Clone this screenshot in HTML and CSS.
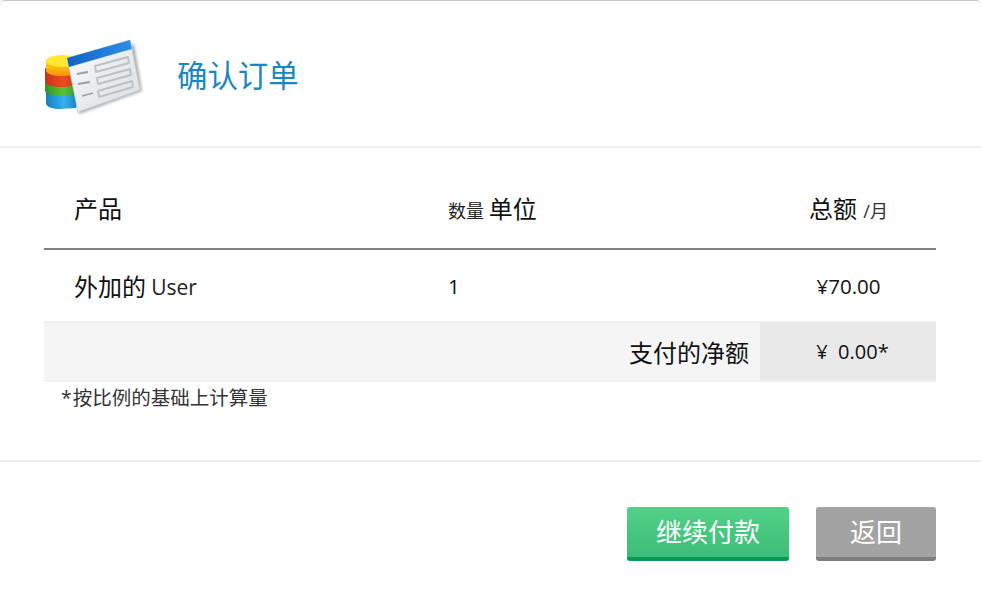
FILE: index.html
```html
<!DOCTYPE html>
<html lang="zh">
<head>
<meta charset="utf-8">
<title>确认订单</title>
<link rel="stylesheet" href="styles.css">
</head>
<body>
<div class="modal">
  <header class="head">
    <svg class="logo" width="100" height="80" viewBox="0 0 100 80">
      <defs>
        <linearGradient id="sheet" x1="0" y1="0" x2="1" y2="1"><stop offset="0" stop-color="#fdfdfe"/><stop offset="1" stop-color="#d6dde2"/></linearGradient>
        <linearGradient id="band" x1="0" y1="0" x2="1" y2="0"><stop offset="0" stop-color="#0f62c6"/><stop offset="1" stop-color="#2f8ee6"/></linearGradient>
        <linearGradient id="y" x1="0" y1="0" x2="0" y2="1"><stop offset="0" stop-color="#ffd81f"/><stop offset=".5" stop-color="#f9b511"/><stop offset="1" stop-color="#f58f10"/></linearGradient>
        <linearGradient id="r" x1="0" y1="0" x2="1" y2="0"><stop offset="0" stop-color="#c8331a"/><stop offset=".5" stop-color="#ee4a20"/><stop offset="1" stop-color="#b8321c"/></linearGradient>
        <linearGradient id="g" x1="0" y1="0" x2="1" y2="0"><stop offset="0" stop-color="#2d9428"/><stop offset=".5" stop-color="#5ac235"/><stop offset="1" stop-color="#2a8a2e"/></linearGradient>
        <linearGradient id="b" x1="0" y1="0" x2="1" y2="0"><stop offset="0" stop-color="#157fc4"/><stop offset=".5" stop-color="#36b0ee"/><stop offset="1" stop-color="#1272ad"/></linearGradient>
        <filter id="soft" x="-10%" y="-10%" width="120%" height="120%"><feGaussianBlur stdDeviation="0.6"/></filter>
        <filter id="shade" x="-20%" y="-20%" width="140%" height="140%"><feGaussianBlur stdDeviation="1.600"/></filter>
      </defs>
      <g filter="url(#soft)">
        <path d="M2 52v16c1 3 7 5 14 5l16-1 6-20z" fill="url(#b)"/>
        <path d="M1 42v13c1 3 8 5 15 5 9 0 18-2 21-6V42z" fill="url(#g)"/>
        <path d="M1 32v14c1 3 8 5 15 5 9 0 18-2 21-6V32z" fill="url(#r)"/>
        <path d="M2 25v10c1 3 8 5 15 5 8 0 17-2 19-6V25z" fill="url(#y)"/>
        <ellipse cx="19" cy="25" rx="17" ry="6" fill="#ffe82e"/>
        <path d="M26 26 90 8l8 47-63 23z" fill="#5e6a75" opacity=".55" filter="url(#shade)"/>
        <path d="M23 22 86 4 96 54 34 76z" fill="url(#sheet)" stroke="#c6ccd1" stroke-width=".7"/>
        <path d="M23 22 86 4l1.800 9L25 31z" fill="url(#band)"/>
        <g fill="none" stroke="#bcc1c5" stroke-width="1.900" stroke-linejoin="round">
          <path d="M51 30 84 21l1 6-33 9z"/>
          <path d="M53 42 86 33l1 6-33 9z"/>
          <path d="M54 55 88 45l1 6-34 10z"/>
        </g>
        <path d="M33 38l11-2M34 48l12-2M38 60l11-3" fill="none" stroke="#9aa0a5" stroke-width="1.800"/>
      </g>
    </svg>
    <h1 class="title">确认订单</h1>
  </header>
  <main class="body">
    <table class="order">
      <thead>
        <tr>
          <th class="col-product">产品</th>
          <th class="col-qty"><small class="sub-md">数量 </small>单位</th>
          <th class="col-total">总额 <small class="sub">/月</small></th>
        </tr>
      </thead>
      <tbody>
        <tr class="item">
          <td class="col-product item-name">外加的 <span class="latin">User</span></td>
          <td class="col-qty latin-num qty-value">1</td>
          <td class="col-total latin-num">¥70.00</td>
        </tr>
        <tr class="net">
          <td class="net-label" colspan="2">支付的净额</td>
          <td class="net-value">¥&nbsp; 0.00*</td>
        </tr>
      </tbody>
    </table>
    <p class="note">* 按比例的基础上计算量</p>
  </main>
  <footer class="foot">
    <button class="btn btn-green">继续付款</button>
    <button class="btn btn-grey">返回</button>
  </footer>
</div>
</body>
</html>
```
FILE: styles.css
```css
* { box-sizing: border-box; }
html, body { margin: 0; padding: 0; height: 100%; background: #fff; overflow: hidden; }
body { font-family: "Open Sans", "Noto Sans CJK SC", sans-serif; color: #111; }
.modal { height: 598px; border-top: 1px solid #c8c8c8; border-radius: 5px 5px 0 0; }
.head { display: flex; align-items: flex-start; padding: 35px 0 0 44px; border-bottom: 2px solid #f0f0f0; height: 147px; }
.logo { display: block; flex: none; }
.title { margin: 20px 0 0 33px; font-size: 30.4px; line-height: 40px; font-weight: 400; color: #1a87c0; }
.body { height: 314px; padding: 0 45px 0 44px; border-bottom: 2px solid #eee; }
.order { width: 892px; border-collapse: collapse; table-layout: fixed; }
.order th { height: 101px; padding-top: 19px; font-size: 24px; font-weight: 400; text-align: left; border-bottom: 2px solid #808080; }
.order .col-product { width: 403px; padding-left: 30px; }
.order .col-qty { width: 313px; }
.order .col-total { width: 176px; text-align: center; padding-right: 0; }
.sub { font-size: 18px; color: #333; }
.sub-md { font-size: 18px; color: #222; }
.item td { height: 73px; font-size: 24px; border-bottom: 2px solid #f0f0f0; }
.item .item-name { padding-bottom: 2px; }
.latin { font-size: 21px; color: #222; vertical-align: 1px; margin-left: -1px; }
.item .latin-num { font-size: 20.5px; }
.item .qty-value { padding-left: 1px; }
.net td { height: 59px; border-bottom: 2px solid #f0f0f0; background: #f5f5f5; }
.order .net-label { font-size: 24px; text-align: right; padding-right: 11px; }
.order .net-value { background: #e9e9e9; font-size: 20px; text-align: center; padding-left: 10px; }
.note { margin: 3px 0 0 17px; font-size: 19.5px; line-height: 26px; color: #333; word-spacing: -4px; }
.foot { display: flex; justify-content: flex-end; gap: 27px; padding: 45px 45px 0 0; }
.btn { height: 54px; border: 0; border-radius: 3px; color: #fff; font: 400 26px/1 "Open Sans", "Noto Sans CJK SC", sans-serif; padding: 0; }
.btn-green { width: 162px; background: linear-gradient(#52d188, #3dbd78); border-bottom: 4px solid #079a56; }
.btn-grey { width: 120px; background: #a3a3a3; border-bottom: 4px solid #7f7f7f; }
```
